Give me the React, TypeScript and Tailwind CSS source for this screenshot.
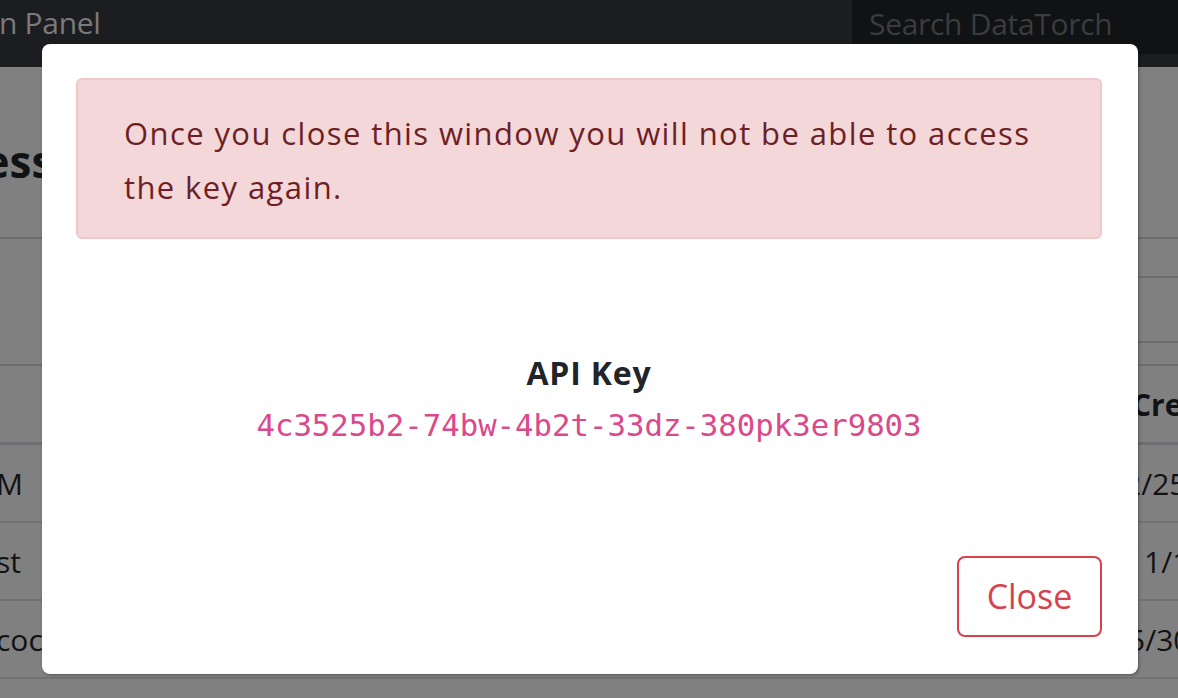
export default function App() {
  const rows = [
    { name: "M", date: "2/25/2021", pad: "pl-[24px]" },
    { name: "st", date: "1/1/2021", pad: "pl-[44px]" },
    { name: "coco", date: "5/30/2021", pad: "pl-[28px]" },
  ];

  return (
    <div
      className="relative w-[1178px] h-[698px] overflow-hidden bg-[#808080]"
      style={{ fontFamily: '"Open Sans", "Noto Sans", sans-serif' }}
    >
      {/* Navbar (dimmed) */}
      <div className="h-[67px] bg-[#1c1d20] flex items-start">
        <div className="flex-1 h-[44px] flex items-center text-[30px] text-[#7a7a7a] tracking-[-0.3px] -ml-[1px]">
          n Panel
        </div>
        <div className="w-[327px] h-[54px] bg-[#111214] border-l border-[#1f2023] flex items-start pt-[1px] pl-[17px] text-[30px] text-[#3b3c3f] tracking-[-0.3px]">
          Search DataTorch
        </div>
      </div>

      {/* Page content (dimmed) */}
      <div className="h-[172px] flex flex-col border-b-2 border-[#6d6d6f]">
        <div className="mt-[72px] -ml-[92px] text-[44px] font-bold text-[#111214] leading-none">
          Access
        </div>
      </div>
      <div className="h-[125px] flex justify-end">
        <div className="w-[40px] mt-[37px] h-[67px] border-y-2 border-[#6d6d6f]" />
      </div>
      <div className="border-t-2 border-[#6d6d6f]">
        <div className="h-[79px] flex items-center justify-between border-b-[3px] border-[#6d6d6f]">
          <span />
          <div className="w-[78px] pl-[32px] whitespace-nowrap text-[30px] font-bold text-[#111214]">
            Created
          </div>
        </div>
        {rows.map((r) => (
          <div
            key={r.name}
            className="h-[78px] flex items-center justify-between border-b-2 border-[#727273] text-[30px] text-[#111214]"
          >
            <span className="-ml-[4px]">{r.name}</span>
            <div className={`w-[78px] whitespace-nowrap ${r.pad}`}>{r.date}</div>
          </div>
        ))}
      </div>

      {/* Modal */}
      <div className="absolute left-[42px] top-[44px] w-[1096px] h-[630px] bg-white rounded-[8px] shadow-[1px_1px_3px_rgba(0,0,0,0.35)] pt-[34px] pl-[34px] pr-[36px] pb-[37px] flex flex-col">
        <div className="h-[161px] bg-[#f3d7d9] border-2 border-[#f0c7cb] rounded-[6px] px-[46px] pt-[26px] text-[#6e1f26] text-[31px] tracking-[1.4px] leading-[54px]">
          Once you close this window you will not be able to access the key again.
        </div>
        <div className="flex-1 flex flex-col items-center pt-[111px]">
          <div className="text-[32px] font-bold text-[#212529] leading-[45px] tracking-[0.8px]">API Key</div>
          <div
            className="text-[30.7px] text-[#d9498b] leading-[61px]"
            style={{ fontFamily: '"DejaVu Sans Mono", monospace' }}
          >
            4c3525b2-74bw-4b2t-33dz-380pk3er9803
          </div>
        </div>
        <div className="flex justify-end">
          <button className="w-[145px] h-[81px] border-2 border-[#d8414c] rounded-[8px] text-[34px] text-[#d8414c] bg-white">
            Close
          </button>
        </div>
      </div>
    </div>
  );
}
